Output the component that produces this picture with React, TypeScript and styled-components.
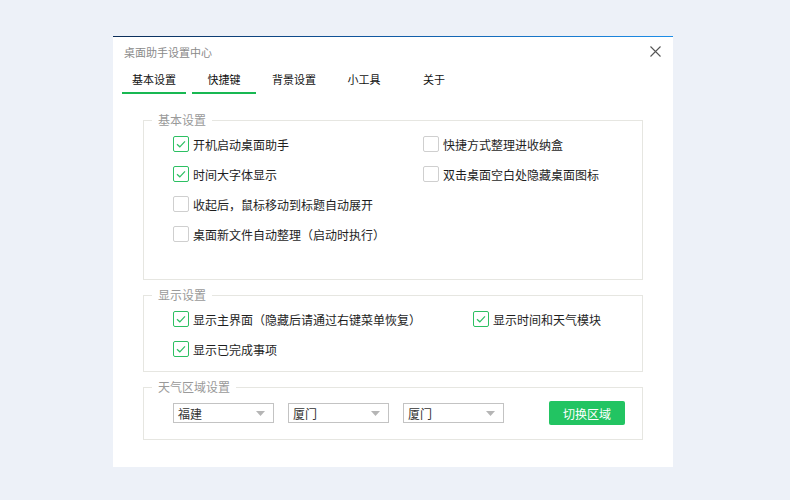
import React, { useState } from "react";
import styled, { createGlobalStyle } from "styled-components";

const GlobalStyle = createGlobalStyle`
  html, body {
    margin: 0;
    padding: 0;
    background: #edf1f8;
  }
  body {
    font-family: "Noto Sans CJK SC", "Noto Sans", sans-serif;
    font-size: 12px;
    color: #222;
  }
`;

const Page = styled.div`
  width: 790px;
  height: 500px;
  padding: 36px 0 0 113px;
  box-sizing: border-box;
`;

const Window = styled.div`
  width: 560px;
  height: 431px;
  background: #fff;
  display: flex;
  flex-direction: column;
`;

const TopLine = styled.div`
  height: 1px;
  background: linear-gradient(90deg, #0b2d58 0%, #10569e 45%, #1e8ee8 100%);
`;

const Header = styled.div`
  height: 29px;
  display: flex;
  align-items: center;
  justify-content: space-between;
  padding: 0 10px 0 11px;
`;

const Title = styled.div`
  color: #8a8a8a;
  font-size: 11px;
`;

const CloseButton = styled.button`
  width: 16px;
  height: 16px;
  padding: 0;
  border: none;
  background: transparent;
  display: flex;
  align-items: center;
  justify-content: center;
  cursor: pointer;
`;

const TabBar = styled.div`
  display: flex;
  gap: 6px;
  padding-left: 9px;
`;

const Tab = styled.div<{ $active: boolean }>`
  width: 64px;
  height: 28px;
  box-sizing: border-box;
  display: flex;
  align-items: center;
  justify-content: center;
  font-size: 11px;
  color: #111;
  border-bottom: 2px solid ${(p) => (p.$active ? "#18b852" : "transparent")};
`;

const Body = styled.div`
  padding: 18px 30px 0 30px;
  display: flex;
  flex-direction: column;
`;

const Group = styled.fieldset<{ $pb: number; $mt: number }>`
  margin: ${(p) => p.$mt}px 0 0 0;
  min-width: 0;
  border: 1px solid #e6e6e1;
  padding: 1px 0 ${(p) => p.$pb}px 0;
`;

const Legend = styled.legend`
  margin-left: 8px;
  padding: 0 6px;
  line-height: 16px;
  color: #9a9a9a;
  font-size: 12px;
`;

const Grid = styled.div<{ $cols: string }>`
  padding-left: 29px;
  display: grid;
  grid-template-columns: ${(p) => p.$cols};
  grid-auto-rows: 30px;
`;

const Row = styled.label<{ $col?: number }>`
  display: flex;
  align-items: center;
  gap: 4px;
  cursor: pointer;
  white-space: nowrap;
  grid-column: ${(p) => (p.$col ? p.$col : "auto")};
`;

const Box = styled.span<{ $checked: boolean }>`
  width: 14px;
  height: 14px;
  border: 1px solid ${(p) => (p.$checked ? "#2cc062" : "#cfcfcf")};
  border-radius: 2px;
  background: #fff;
  display: flex;
  align-items: center;
  justify-content: center;
  flex-shrink: 0;
`;

const LabelText = styled.span`
  color: #1e1e1e;
  font-size: 12px;
`;

const RegionRow = styled.div`
  display: flex;
  align-items: center;
  height: 24px;
  margin-top: 5px;
  padding-left: 29px;
`;

const Select = styled.div`
  width: 101px;
  height: 20px;
  box-sizing: border-box;
  border: 1px solid #c3c3c3;
  margin-right: 14px;
  padding: 0 8px 0 4px;
  display: flex;
  align-items: center;
  justify-content: space-between;
  color: #333;
  font-size: 12px;
`;

const SwitchButton = styled.button`
  margin-left: 31px;
  width: 76px;
  height: 24px;
  border: none;
  border-radius: 2px;
  background: #22c462;
  color: #fff;
  font-family: inherit;
  font-size: 12px;
  cursor: pointer;
`;

const CheckMark = () => (
  <svg width="12" height="12" viewBox="0 0 12 12">
    <polyline points="2,6.2 4.8,8.8 10,3.3" fill="none" stroke="#2cc062" strokeWidth="1.2" />
  </svg>
);

const Arrow = () => (
  <svg width="9" height="5" viewBox="0 0 9 5">
    <polygon points="0,0 9,0 4.5,5" fill="#b5b5b5" />
  </svg>
);

const CheckRow: React.FC<{ label: string; initial: boolean; col?: number }> = ({ label, initial, col }) => {
  const [checked, setChecked] = useState(initial);
  return (
    <Row $col={col} onClick={() => setChecked(!checked)}>
      <Box $checked={checked}>{checked && <CheckMark />}</Box>
      <LabelText>{label}</LabelText>
    </Row>
  );
};

const tabs = ["基本设置", "快捷键", "背景设置", "小工具", "关于"];

export default function App() {
  return (
    <>
      <GlobalStyle />
      <Page>
        <Window>
          <TopLine />
          <Header>
            <Title>桌面助手设置中心</Title>
            <CloseButton>
              <svg width="11" height="11" viewBox="0 0 11 11">
                <path d="M0.5 0.5 L10.5 10.5 M10.5 0.5 L0.5 10.5" stroke="#555" strokeWidth="1.1" />
              </svg>
            </CloseButton>
          </Header>
          <TabBar>
            {tabs.map((t, i) => (
              <Tab key={t} $active={i < 2}>
                {t}
              </Tab>
            ))}
          </TabBar>
          <Body>
            <Group $pb={30} $mt={0}>
              <Legend>基本设置</Legend>
              <Grid $cols="250px 1fr">
                <CheckRow label="开机启动桌面助手" initial={true} />
                <CheckRow label="快捷方式整理进收纳盒" initial={false} />
                <CheckRow label="时间大字体显示" initial={true} />
                <CheckRow label="双击桌面空白处隐藏桌面图标" initial={false} />
                <CheckRow label="收起后，鼠标移动到标题自动展开" initial={false} col={1} />
                <CheckRow label="桌面新文件自动整理（启动时执行）" initial={false} col={1} />
              </Grid>
            </Group>
            <Group $pb={7} $mt={7}>
              <Legend>显示设置</Legend>
              <Grid $cols="300px 1fr">
                <CheckRow label="显示主界面（隐藏后请通过右键菜单恢复）" initial={true} />
                <CheckRow label="显示时间和天气模块" initial={true} />
                <CheckRow label="显示已完成事项" initial={true} />
              </Grid>
            </Group>
            <Group $pb={14} $mt={7}>
              <Legend>天气区域设置</Legend>
              <RegionRow>
                <Select>
                  <span>福建</span>
                  <Arrow />
                </Select>
                <Select>
                  <span>厦门</span>
                  <Arrow />
                </Select>
                <Select>
                  <span>厦门</span>
                  <Arrow />
                </Select>
                <SwitchButton>切换区域</SwitchButton>
              </RegionRow>
            </Group>
          </Body>
        </Window>
      </Page>
    </>
  );
}
